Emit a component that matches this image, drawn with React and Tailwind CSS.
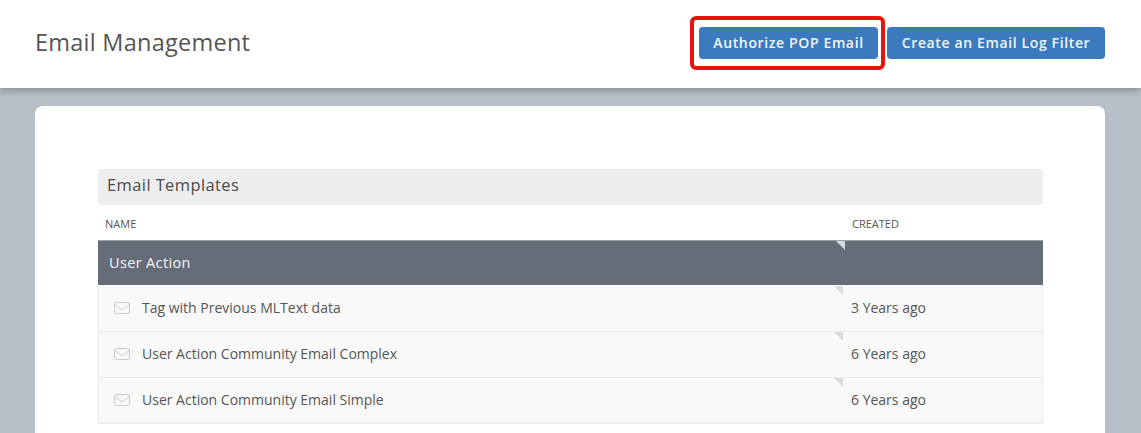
const rows = [
  { name: "Tag with Previous MLText data", created: "3 Years ago" },
  { name: "User Action Community Email Complex", created: "6 Years ago" },
  { name: "User Action Community Email Simple", created: "6 Years ago" },
];

const MailIcon = () => (
  <svg width="16" height="12" viewBox="0 0 16 12" fill="none" stroke="#c9cbce" strokeWidth="1" className="shrink-0">
    <rect x="0.5" y="0.5" width="15" height="11" rx="1.5" />
    <path d="M0.8 2.5 L6.6 7 Q8 8 9.4 7 L15.2 2.5" />
  </svg>
);

// little folded corner at the top of the created column
const Corner = ({ color, className }) => (
  <svg width="9" height="9" viewBox="0 0 9 9" className={className}>
    <path d="M0 0 H9 V9 Z" fill={color} />
  </svg>
);

const App = () => {
  return (
    <div className="h-[433px] w-[1141px] overflow-hidden bg-[#b8bfc8] font-['Open_Sans',sans-serif] text-[#4a4a4a]">
      <header className="relative flex h-[88px] items-center justify-between bg-white pb-[2px] pl-[35px] pr-[36px] shadow-[0_2px_8px_rgba(60,70,80,0.45)]">
        <h1 className="text-[23.5px] font-normal tracking-[0.25px] text-[#555]">Email Management</h1>
        <div className="flex gap-[9px]">
          <div className="relative">
            <button className="h-[32px] w-[179px] rounded-[4px] bg-[#3a7abd] pb-[2px] text-[14px] font-[550] tracking-[0.63px] text-[#f2f6fa]">
              Authorize POP Email
            </button>
            <div className="absolute -left-[9px] -top-[11px] h-[54px] w-[195px] rounded-[6px] border-4 border-[#e8140c]" />
          </div>
          <button className="h-[32px] w-[218px] rounded-[4px] bg-[#3a7abd] pb-[2px] text-[14px] font-[550] tracking-[0.63px] text-[#f2f6fa]">
            Create an Email Log Filter
          </button>
        </div>
      </header>

      <div className="mx-[35px] mt-[18px] h-[400px] w-[1070px] rounded-t-[8px] bg-white pl-[63px] pr-[62px] pt-[63px]">
        <div className="flex h-[36px] items-center rounded-[4px] bg-[#eeeeee] px-[9px] pb-[3px] text-[16.5px] tracking-[0.4px] text-[#4a4a4a]">
          Email Templates
        </div>

        <div className="flex h-[35px] items-center pt-[4px] text-[11px] text-[#555]">
          <div className="w-[747px] pl-[7px]">NAME</div>
          <div className="pl-[7px]">CREATED</div>
        </div>

        <div className="flex h-[45px] items-center border-t border-[#9ca3ab] bg-[#666d78] text-[14.5px] font-medium tracking-[0.35px] text-[#f3f4f5]">
          <div className="relative flex h-full w-[747px] items-center pl-[11px]">
            User Action
            <Corner color="#d5d8dc" className="absolute right-0 top-0" />
          </div>
        </div>

        <div className="border-x border-[#ebebeb] bg-[#f9f9f9] pt-px">
          {rows.map((row) => (
            <div key={row.name} className="flex h-[46px] items-center border-b border-[#ebebeb] pb-[2px] text-[14px] text-[#555]">
              <div className="relative flex h-full w-[745px] items-center gap-[12px] pl-[15px]">
                <MailIcon />
                {row.name}
                <Corner color="#dcdcdc" className="absolute right-[1px] top-0" />
              </div>
              <div className="pl-[7px]">{row.created}</div>
            </div>
          ))}
        </div>
      </div>
    </div>
  );
};

export default App;
